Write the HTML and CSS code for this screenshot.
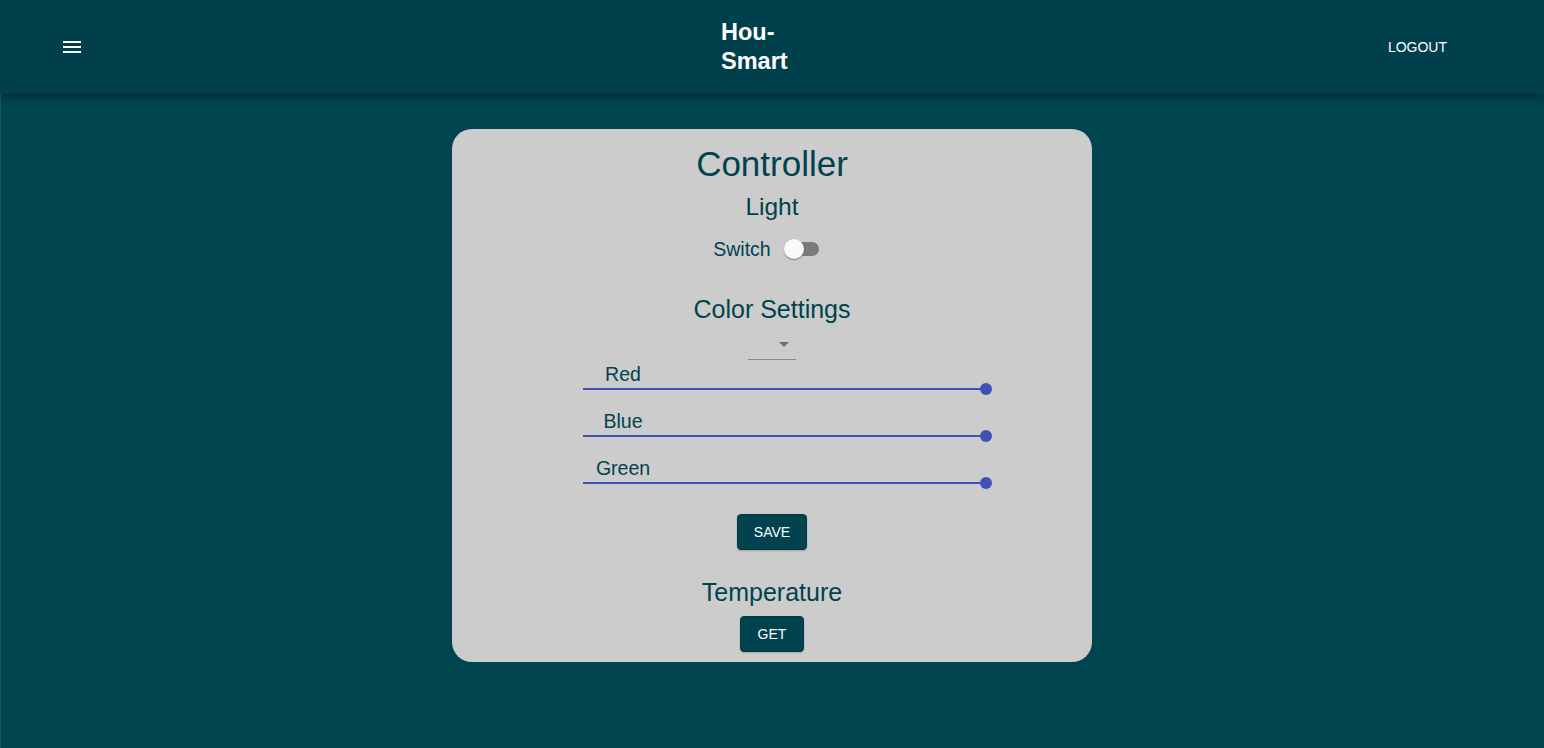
FILE: index.html
```html
<!DOCTYPE html>
<html lang="en">
<head>
<meta charset="utf-8">
<title>Hou-Smart</title>
<link rel="stylesheet" href="styles.css">
</head>
<body>
<header class="appbar">
  <button class="menu-btn" aria-label="menu">
    <svg viewBox="0 0 24 24" width="24" height="24"><path fill="#ffffff" d="M3 18h18v-2H3v2zm0-5h18v-2H3v2zm0-7v2h18V6H3z"/></svg>
  </button>
  <div class="brand">Hou-<br>Smart</div>
  <button class="logout">Logout</button>
</header>
<main class="card">
  <h1 class="title">Controller</h1>
  <h2 class="section-title">Light</h2>
  <div class="switch-row">
    <span class="switch-label">Switch</span>
    <span class="switch">
      <span class="switch-track"></span>
      <span class="switch-thumb"></span>
    </span>
  </div>
  <h2 class="section-title section-title--color">Color Settings</h2>
  <div class="select"><span class="select-arrow"></span></div>
  <div class="sliders">
    <div class="slider">
      <div class="slider-label">Red</div>
      <div class="slider-track"><span class="slider-thumb"></span></div>
    </div>
    <div class="slider">
      <div class="slider-label">Blue</div>
      <div class="slider-track"><span class="slider-thumb"></span></div>
    </div>
    <div class="slider">
      <div class="slider-label">Green</div>
      <div class="slider-track"><span class="slider-thumb"></span></div>
    </div>
  </div>
  <button class="btn btn--save">Save</button>
  <h2 class="section-title section-title--temp">Temperature</h2>
  <button class="btn btn--get">Get</button>
</main>
</body>
</html>
```
FILE: styles.css
```css
html, body {
  margin: 0;
  padding: 0;
}
body {
  background: #004450;
  min-height: 100vh;
  font-family: "Liberation Sans", Arial, sans-serif;
  box-shadow: inset 1px 0 0 #155663;
}
.appbar {
  height: 94px;
  display: flex;
  align-items: center;
  padding: 0 89px 0 48px;
  background: #003f4c;
  box-shadow: 0 2px 4px -1px rgba(0,0,0,0.2), 0 4px 5px 0 rgba(0,0,0,0.14), 0 1px 10px 0 rgba(0,0,0,0.12);
  position: relative;
  z-index: 1;
}
.menu-btn {
  width: 48px;
  height: 48px;
  padding: 12px;
  border: 0;
  background: transparent;
  display: flex;
  box-sizing: border-box;
}
.brand {
  margin-left: 625px;
  color: #ffffff;
  font-weight: 700;
  font-size: 23.5px;
  line-height: 29px;
}
.logout {
  margin-left: auto;
  border: 0;
  background: transparent;
  color: #ffffff;
  font-family: "Liberation Sans", Arial, sans-serif;
  font-size: 14px;
  line-height: 24px;
  padding: 6px 8px;
  text-transform: uppercase;
}
.card {
  width: 640px;
  margin: 35px auto 0;
  background: #cccccc;
  border-radius: 20px;
  padding: 15px 0 10px;
  box-sizing: border-box;
  display: flex;
  flex-direction: column;
  align-items: center;
  color: #00434f;
}
.title {
  margin: 0;
  font-size: 35px;
  line-height: 40px;
  font-weight: 400;
}
.section-title {
  margin: 9px 0 0;
  font-size: 24.5px;
  line-height: 28px;
  font-weight: 400;
}
.section-title--color {
  margin-top: 26px;
  font-size: 25px;
  line-height: 30px;
}
.section-title--temp {
  margin-top: 28px;
  font-size: 25px;
}
.switch-row {
  margin-top: 9px;
  height: 38px;
  display: flex;
  align-items: center;
  gap: 2px;
}
.switch-label {
  font-size: 19.5px;
  line-height: 24px;
}
.switch {
  position: relative;
  width: 58px;
  height: 38px;
}
.switch-track {
  position: absolute;
  left: 12px;
  top: 12px;
  width: 34px;
  height: 14px;
  border-radius: 7px;
  background: #7b7b7b;
}
.switch-thumb {
  position: absolute;
  left: 11px;
  top: 9px;
  width: 20px;
  height: 20px;
  border-radius: 50%;
  background: #fafafa;
  box-shadow: 0 2px 1px -1px rgba(0,0,0,0.2), 0 1px 1px 0 rgba(0,0,0,0.14), 0 1px 3px 0 rgba(0,0,0,0.12);
}
.select {
  margin-top: 2px;
  width: 48px;
  height: 34px;
  box-sizing: border-box;
  border-bottom: 1px solid #8a8a8a;
  display: flex;
  justify-content: flex-end;
  align-items: flex-start;
  padding: 16px 7px 0 0;
}
.select-arrow {
  width: 0;
  height: 0;
  border-left: 5px solid transparent;
  border-right: 5px solid transparent;
  border-top: 5px solid #6f6f6f;
}
.sliders {
  align-self: stretch;
  padding-left: 131px;
  margin-top: 2px;
  display: flex;
  flex-direction: column;
  gap: 17px;
}
.slider {
  width: 403px;
}
.slider-label {
  width: 80px;
  text-align: center;
  font-size: 19.5px;
  line-height: 24px;
}
.slider-track {
  position: relative;
  height: 6px;
}
.slider-track::before {
  content: "";
  position: absolute;
  left: 0;
  right: 0;
  top: 2px;
  height: 2px;
  background: #3f51b5;
}
.slider-thumb {
  position: absolute;
  right: -6px;
  top: -3px;
  width: 12px;
  height: 12px;
  border-radius: 50%;
  background: #3f51b5;
}
.btn {
  height: 36px;
  min-width: 64px;
  padding: 0 16px;
  box-sizing: border-box;
  border: 1px solid #003844;
  border-radius: 4px;
  background: #00434f;
  color: #ffffff;
  font-family: "Liberation Sans", Arial, sans-serif;
  font-size: 14px;
  text-transform: uppercase;
  box-shadow: 0 1px 2px rgba(0,0,0,0.2);
}
.btn--save {
  margin-top: 28px;
}
.btn--get {
  margin-top: 10px;
}
```
